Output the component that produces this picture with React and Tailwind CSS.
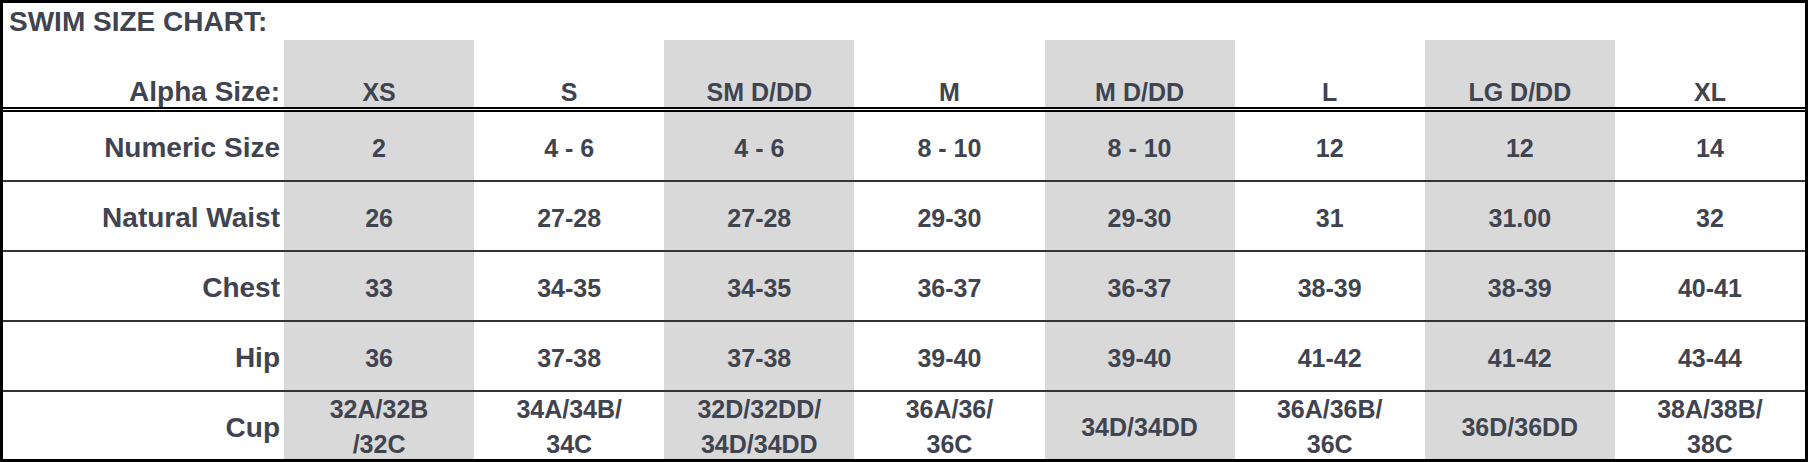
const SIZES = ["XS", "S", "SM D/DD", "M", "M D/DD", "L", "LG D/DD", "XL"];

const ROWS = [
    { label: "Numeric Size", values: ["2", "4 - 6", "4 - 6", "8 - 10", "8 - 10", "12", "12", "14"] },
    { label: "Natural Waist", values: ["26", "27-28", "27-28", "29-30", "29-30", "31", "31.00", "32"] },
    { label: "Chest", values: ["33", "34-35", "34-35", "36-37", "36-37", "38-39", "38-39", "40-41"] },
    { label: "Hip", values: ["36", "37-38", "37-38", "39-40", "39-40", "41-42", "41-42", "43-44"] },
    {
        label: "Cup",
        values: [
            ["32A/32B", "/32C"],
            ["34A/34B/", "34C"],
            ["32D/32DD/", "34D/34DD"],
            ["36A/36/", "36C"],
            ["34D/34DD"],
            ["36A/36B/", "36C"],
            ["36D/36DD"],
            ["38A/38B/", "38C"]
        ]
    }
];

const grid = "grid grid-cols-[281px_repeat(8,minmax(0,1fr))] grid-rows-[minmax(0,1fr)]";

function Cell({ i, children, className = "" }) {
    const shade = i % 2 === 0 ? "bg-[#d9d9d9]" : "bg-white";
    return (
        <div className={`${shade} flex flex-col items-center text-center ${className}`}>
            {children}
        </div>
    );
}

export default function App() {
    return (
        <div className="w-[1808px] h-[462px] bg-white border-[3px] border-black font-['Liberation_Sans',Arial,sans-serif] font-bold text-[#3f4450] flex flex-col">
            {/* TITLE */}
            <div className="h-[37px] shrink-0 pl-[6px] pt-[3px] text-[28px] leading-[32px]">
                SWIM SIZE CHART:
            </div>

            {/* HEADER */}
            <div className={`${grid} h-[72px] shrink-0 border-b-[5px] border-double border-black`}>
                <div className="flex items-end justify-end pr-[4px] pb-[2px] text-[28px] leading-[27px]">
                    Alpha Size:
                </div>
                {SIZES.map((s, i) => (
                    <Cell key={s} i={i} className="justify-end pb-[2px] text-[25px] leading-[25px]">
                        {s}
                    </Cell>
                ))}
            </div>

            {/* BODY */}
            {ROWS.map((row, r) => (
                <div
                    key={row.label}
                    className={`${grid} shrink-0 ${r < ROWS.length - 1 ? "h-[70px] border-b-2 border-[#333]" : "h-[67px]"}`}
                >
                    <div className="flex items-center justify-end pr-[4px] pt-[4px] text-[28px] leading-[30px]">
                        {row.label}
                    </div>
                    {row.values.map((v, i) => (
                        <Cell key={i} i={i} className={`justify-center text-[25px] ${Array.isArray(v) && v.length > 1 ? "pt-[2px]" : "pt-[4px]"}`}>
                            {Array.isArray(v) ? (
                                v.map((line) => (
                                    <span key={line} className="leading-[35px] block">{line}</span>
                                ))
                            ) : (
                                <span className="leading-[30px]">{v}</span>
                            )}
                        </Cell>
                    ))}
                </div>
            ))}
        </div>
    );
}
